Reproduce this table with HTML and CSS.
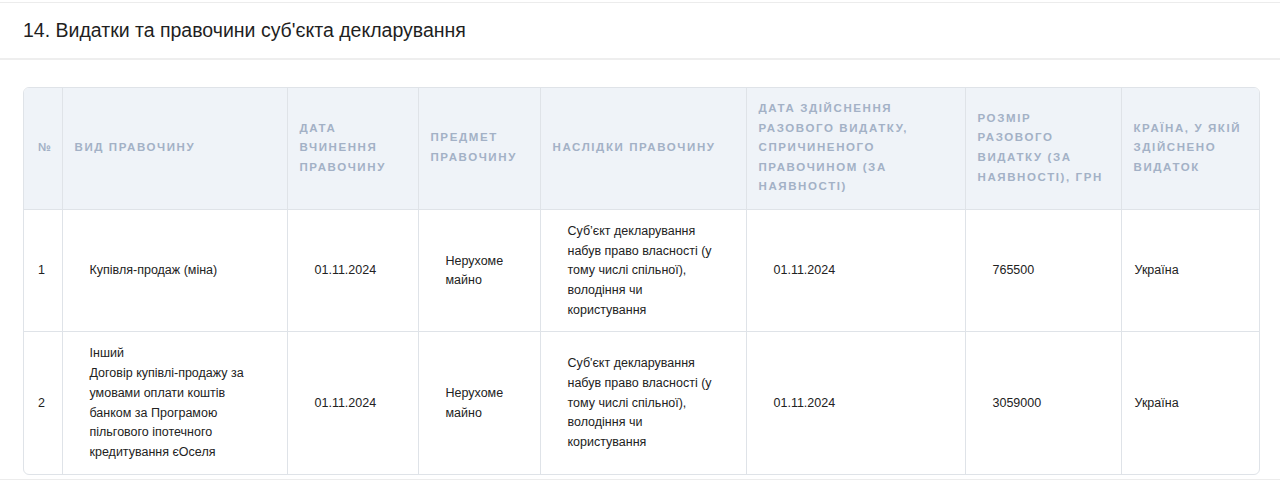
FILE: index.html
```html
<!DOCTYPE html>
<html lang="uk">
<head>
<meta charset="utf-8">
<title>Видатки та правочини</title>
<link rel="stylesheet" href="styles.css">
</head>
<body>
<section class="card">
  <header class="card-head">
    <h2 class="card-title">14. Видатки та правочини суб'єкта декларування</h2>
  </header>
  <div class="card-body">
    <div class="table-wrap">
      <table class="decl-table">
        <colgroup>
          <col class="c1"><col class="c2"><col class="c3"><col class="c4"><col class="c5"><col class="c6"><col class="c7"><col class="c8">
        </colgroup>
        <thead>
          <tr>
            <th class="num">№</th>
            <th>Вид правочину</th>
            <th>Дата вчинення правочину</th>
            <th>Предмет правочину</th>
            <th>Наслідки правочину</th>
            <th>Дата здійснення разового видатку, спричиненого правочином (за наявності)</th>
            <th>Розмір разового видатку (за наявності), грн</th>
            <th>Країна, у якій здійснено видаток</th>
          </tr>
        </thead>
        <tbody>
          <tr>
            <td class="num">1</td>
            <td class="in">Купівля-продаж (міна)</td>
            <td class="in">01.11.2024</td>
            <td class="in">Нерухоме майно</td>
            <td class="in">Суб’єкт декларування набув право власності (у тому числі спільної), володіння чи користування</td>
            <td class="in">01.11.2024</td>
            <td class="in">765500</td>
            <td>Україна</td>
          </tr>
          <tr>
            <td class="num">2</td>
            <td class="in">Інший<br>Договір купівлі-продажу за умовами оплати коштів банком за Програмою пільгового іпотечного кредитування єОселя</td>
            <td class="in">01.11.2024</td>
            <td class="in">Нерухоме майно</td>
            <td class="in">Суб'єкт декларування набув право власності (у тому числі спільної), володіння чи користування</td>
            <td class="in">01.11.2024</td>
            <td class="in">3059000</td>
            <td>Україна</td>
          </tr>
        </tbody>
      </table>
    </div>
  </div>
</section>
</body>
</html>
```

FILE: styles.css
```css
* { box-sizing: border-box; }

html, body {
  margin: 0;
  padding: 0;
  background: #ffffff;
}

body {
  font-family: "Liberation Sans", Arial, sans-serif;
  color: #222222;
}

.card {
  margin-top: 2px;
  border-top: 1px solid #ececec;
  border-bottom: 1px solid #ececec;
  background: #ffffff;
  height: 478px;
}

.card-head {
  height: 57px;
  border-bottom: 2px solid #eeeeee;
  padding: 0 23px;
  display: flex;
  align-items: center;
}

.card-title {
  margin: 0;
  font-size: 19.5px;
  font-weight: 400;
  color: #1f1f1f;
  padding-bottom: 1px;
}

.card-body {
  padding: 27px 20px 0 23px;
}

.table-wrap {
  width: 1237px;
  border: 1px solid #dfe3e8;
  border-radius: 6px;
  overflow: hidden;
}

.decl-table {
  width: 100%;
  border-collapse: collapse;
  table-layout: fixed;
}

.c1 { width: 38px; }
.c2 { width: 225px; }
.c3 { width: 131px; }
.c4 { width: 122px; }
.c5 { width: 206px; }
.c6 { width: 219px; }
.c7 { width: 156px; }
.c8 { width: 138px; }

.decl-table th,
.decl-table td {
  border-left: 1px solid #dfe3e8;
  border-top: 1px solid #dfe3e8;
  vertical-align: middle;
  text-align: left;
}

.decl-table tr > :first-child { border-left: none; }
.decl-table thead tr > * { border-top: none; }

.decl-table th {
  background: #eff3f8;
  color: #a3b1c6;
  font-size: 11.5px;
  font-weight: 700;
  letter-spacing: 1.6px;
  text-transform: uppercase;
  line-height: 19.6px;
  padding: 11px 12px 12px 12px;
  height: 121px;
}

.decl-table th.num {
  padding-left: 14px;
  padding-right: 0;
  letter-spacing: 0;
}

.decl-table td {
  font-size: 12.5px;
  line-height: 19.7px;
  padding: 12px 12px 11px 13px;
  color: #222222;
}

.decl-table td.in {
  padding-left: 27px;
  padding-right: 30px;
}

.decl-table td.num {
  padding-left: 14px;
  padding-right: 0;
}

.decl-table tbody tr:first-child td { height: 122px; }
.decl-table tbody tr:last-child td { height: 140px; }
```
